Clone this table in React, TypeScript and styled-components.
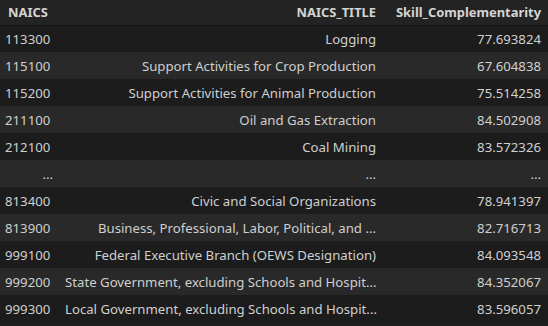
import React from "react";
import styled, { createGlobalStyle } from "styled-components";

const Global = createGlobalStyle`
  html, body { margin: 0; padding: 0; background: #1f1f1f; }
  body { font-family: "Noto Sans", "Open Sans", sans-serif; }
`;

const Frame = styled.div`
  width: 548px;
  height: 326px;
  background: #1f1f1f;
  overflow: hidden;
`;

const Table = styled.table`
  width: 548px;
  border-collapse: collapse;
  table-layout: fixed;
  font-size: 13.2px;
  color: #cfcfcf;
`;

const HeadRow = styled.tr`
  height: 25px;
  background: #232323;
  border-bottom: 1px solid #161616;
`;

const HeadCell = styled.th<{ $align: "left" | "right" }>`
  font-weight: 700;
  font-size: 12.9px;
  text-align: ${(p) => p.$align};
  padding: 0 7px 0 8px;
  color: #d4d4d4;
  white-space: nowrap;
`;

const Row = styled.tr<{ $even: boolean }>`
  height: 27px;
  background: ${(p) => (p.$even ? "#292929" : "#1c1c1c")};
`;

const Cell = styled.td<{ $align: "left" | "right" }>`
  text-align: ${(p) => p.$align};
  padding: 0 7px 0 5px;
  white-space: nowrap;
  overflow: hidden;
`;

const rows: [string, string, string][] = [
  ["113300", "Logging", "77.693824"],
  ["115100", "Support Activities for Crop Production", "67.604838"],
  ["115200", "Support Activities for Animal Production", "75.514258"],
  ["211100", "Oil and Gas Extraction", "84.502908"],
  ["212100", "Coal Mining", "83.572326"],
  ["...", "...", "..."],
  ["813400", "Civic and Social Organizations", "78.941397"],
  ["813900", "Business, Professional, Labor, Political, and ...", "82.716713"],
  ["999100", "Federal Executive Branch (OEWS Designation)", "84.093548"],
  ["999200", "State Government, excluding Schools and Hospit...", "84.352067"],
  ["999300", "Local Government, excluding Schools and Hospit...", "83.596057"],
];

export default function App() {
  return (
    <Frame>
      <Global />
      <Table>
        <colgroup>
          <col style={{ width: 60 }} />
          <col style={{ width: 323 }} />
          <col style={{ width: 165 }} />
        </colgroup>
        <thead>
          <HeadRow>
            <HeadCell $align="left">NAICS</HeadCell>
            <HeadCell $align="right">NAICS_TITLE</HeadCell>
            <HeadCell $align="right">Skill_Complementarity</HeadCell>
          </HeadRow>
        </thead>
        <tbody>
          {rows.map((r, i) => (
            <Row key={i} $even={i % 2 === 1}>
              <Cell $align={r[0] === "..." ? "right" : "left"}>{r[0]}</Cell>
              <Cell $align="right">{r[1]}</Cell>
              <Cell $align="right">{r[2]}</Cell>
            </Row>
          ))}
        </tbody>
      </Table>
    </Frame>
  );
}
